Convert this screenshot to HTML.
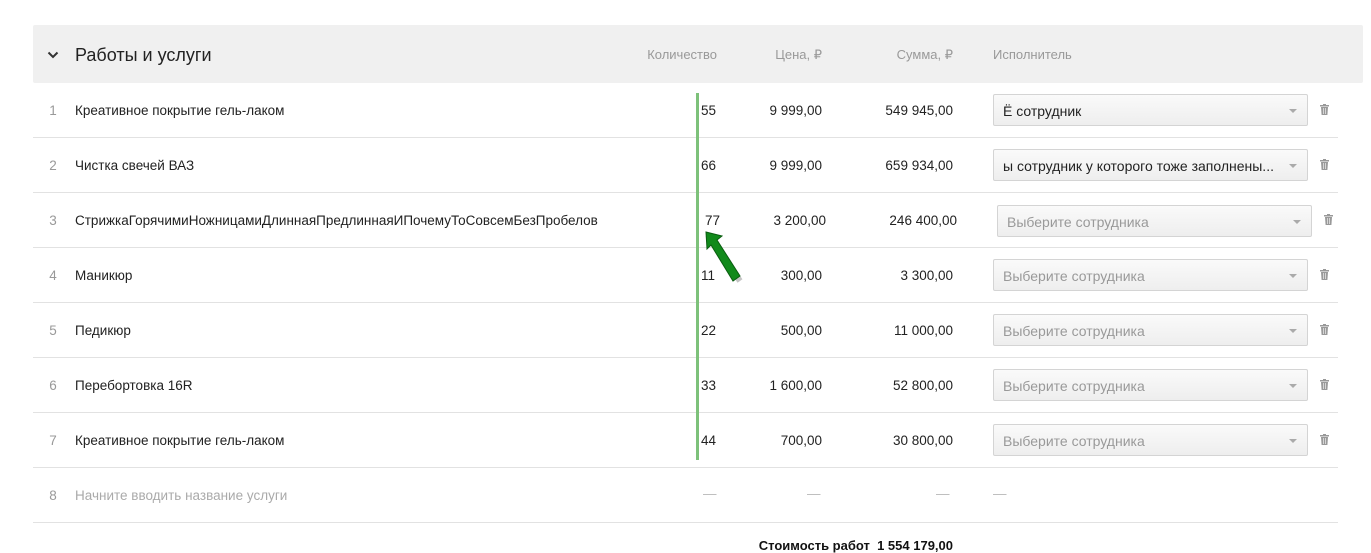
<!DOCTYPE html>
<html><head><meta charset="utf-8"><style>
*{margin:0;padding:0;box-sizing:border-box}
body{width:1371px;height:550px;overflow:hidden;background:#fff;font-family:"Liberation Sans",sans-serif;font-size:13.5px;color:#222;position:relative}
.a{position:absolute;white-space:nowrap}
.hdr{position:absolute;left:33px;top:25px;width:1330px;height:58px;background:#f0f0f0;border-radius:2px}
.h{color:#999;font-size:13px;top:47px}
.line{position:absolute;left:33px;width:1305px;height:1px;background:#e2e2e2}
.num{color:#999;width:20px;text-align:center}
.r{text-align:right}
.sel{position:absolute;width:315px;height:32px;border:1px solid #d4d4d4;border-radius:2px;background:linear-gradient(#fafafa,#eee);padding:8px 9px;font-size:14px;white-space:nowrap;overflow:hidden}
.sel.p{color:#999}
.sel:after{content:"";position:absolute;right:10px;top:14px;border:4px solid transparent;border-top:4px solid #aaa;border-bottom:0}
.tr{position:absolute;width:9px;height:11px}
</style></head><body>
<div class="hdr"></div>
<svg class="a" style="left:47px;top:50px" width="12" height="10"><path d="M1.5 2.5 L6 7 L10.5 2.5" stroke="#333" stroke-width="2" fill="none"/></svg>
<div class="a" style="left:75px;top:45px;font-size:18px;color:#222">Работы и услуги</div>
<div class="a h r" style="right:654px">Количество</div>
<div class="a h r" style="right:549px">Цена, ₽</div>
<div class="a h r" style="right:418px">Сумма, ₽</div>
<div class="a h" style="left:993px">Исполнитель</div>

<div id="rows"></div>
<script>
var d=[["Креативное покрытие гель-лаком","55","9 999,00","549 945,00","Ё сотрудник",0],
["Чистка свечей ВАЗ","66","9 999,00","659 934,00","ы сотрудник у которого тоже заполнены...",0],
["СтрижкаГорячимиНожницамиДлиннаяПредлиннаяИПочемуТоСовсемБезПробелов","77","3 200,00","246 400,00","Выберите сотрудника",4],
["Маникюр","11","300,00","3 300,00","Выберите сотрудника",0],
["Педикюр","22","500,00","11 000,00","Выберите сотрудника",0],
["Перебортовка 16R","33","1 600,00","52 800,00","Выберите сотрудника",0],
["Креативное покрытие гель-лаком","44","700,00","30 800,00","Выберите сотрудника",0]];
var h="";
d.forEach(function(r,i){var y=83+i*55,ty=y+20,o=r[5];
h+='<div class="a num" style="left:43px;top:'+ty+'px">'+(i+1)+'</div>';
h+='<div class="a" style="left:75px;top:'+ty+'px">'+r[0]+'</div>';
h+='<div class="a" style="left:'+(701+o)+'px;top:'+ty+'px">'+r[1]+'</div>';
h+='<div class="a r" style="right:'+(549-o)+'px;top:'+ty+'px">'+r[2]+'</div>';
h+='<div class="a r" style="right:'+(418-o)+'px;top:'+ty+'px">'+r[3]+'</div>';
h+='<div class="sel'+(r[4][0]=="В"?" p":"")+'" style="left:'+(993+o)+'px;top:'+(y+11+(o?1:0))+'px">'+r[4]+'</div>';
h+='<svg class="tr" style="left:'+(1320+o)+'px;top:'+(y+21)+'px" viewBox="0 0 9 11"><rect x="0" y="1" width="9" height="1.5" fill="#999"/><rect x="3" y="0" width="3" height="1.5" fill="#999"/><path d="M1 3h7l-.6 8H1.6z" fill="#999"/><path d="M3.5 4v6M5.5 4v6" stroke="#fff" stroke-width=".6"/></svg>';
h+='<div class="line" style="top:'+(y+54)+'px"></div>';
});
document.getElementById("rows").innerHTML=h;
</script>
<div class="a num" style="left:43px;top:488px">8</div>
<div class="a" style="left:75px;top:488px;color:#aaa">Начните вводить название услуги</div>
<div class="a" style="left:703px;top:486px;color:#bbb">—</div>
<div class="a" style="left:807px;top:486px;color:#bbb">—</div>
<div class="a" style="left:936px;top:486px;color:#bbb">—</div>
<div class="a" style="left:993px;top:486px;color:#bbb">—</div>
<div class="line" style="top:522px"></div>
<div class="a r" style="right:418px;top:538px;font-weight:bold;font-size:13px;color:#111">Стоимость работ&nbsp; 1 554 179,00</div>
<div class="a" style="left:696px;top:93px;width:3px;height:367px;background:#7dc17a"></div>
<svg class="a" style="left:700px;top:226px" width="50" height="62"><path d="M8 9 L40 55" stroke="#555" stroke-opacity=".35" stroke-width="6"/><path d="M6 6 L22 10 L17 14 L40 50 L33 55 L11 19 L7 23 Z" fill="#118a1b" stroke="#0a5d10" stroke-width="1"/></svg>
</body></html>
